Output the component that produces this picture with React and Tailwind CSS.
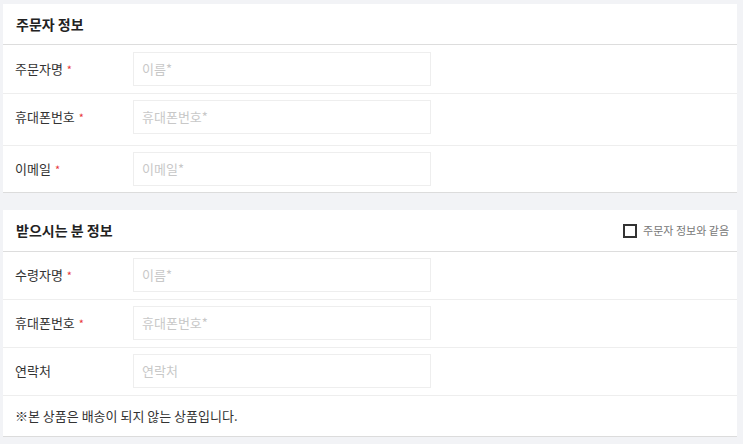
const FONT = "font-['Noto_Sans_CJK_KR','Noto_Sans',sans-serif]";

function Field({ label, required, placeholder, className }) {
  return (
    <div className={`flex items-start border-b border-[#eeeeee] pl-3 ${className}`}>
      <div className="w-[118px] h-[34px] flex items-center text-[13px] text-[#333]">
        {label}
        {required && <span className="ml-[4px] text-[#e8343b] text-[11px]">*</span>}
      </div>
      <div className="w-[298px] h-[34px] border border-[#eeeeee] px-2 flex items-center text-[13px] text-[#c8c8c8]">
        {placeholder}
      </div>
    </div>
  );
}

export default function App() {
  return (
    <div className={`min-h-[444px] bg-[#f2f3f6] pt-[4px] pl-[3px] pr-[6px] ${FONT}`}>
      {/* 주문자 정보 */}
      <div className="bg-white border-b border-[#dcdcdc]">
        <div className="h-[41px] flex items-center pl-[13px] border-b border-[#dddddd] text-[14px] font-bold text-[#222]">
          주문자 정보
        </div>
        <Field label="주문자명" required placeholder="이름*" className="pt-[7px] pb-[7px]" />
        <Field label="휴대폰번호" required placeholder="휴대폰번호*" className="pt-[6px] pb-[11px]" />
        <Field label="이메일" required placeholder="이메일*" className="pt-[6px] pb-[6px] border-b-0" />
      </div>

      {/* 받으시는 분 정보 */}
      <div className="mt-[17px] bg-white border-b border-[#dcdcdc]">
        <div className="h-[42px] flex items-center justify-between pl-[13px] pr-[8px] border-b border-[#dddddd]">
          <span className="text-[14px] font-bold text-[#222]">받으시는 분 정보</span>
          <label className="flex items-center gap-[6px] text-[11px] text-[#777]">
            <span className="w-[14px] h-[14px] border-2 border-[#333] bg-white" />
            주문자 정보와 같음
          </label>
        </div>
        <Field label="수령자명" required placeholder="이름*" className="pt-[6px] pb-[7px]" />
        <Field label="휴대폰번호" required placeholder="휴대폰번호*" className="pt-[6px] pb-[7px]" />
        <Field label="연락처" placeholder="연락처" className="pt-[6px] pb-[7px]" />
        <div className="h-[40px] flex items-center pl-3 text-[13px] text-[#333]">
          ※본 상품은 배송이 되지 않는 상품입니다.
        </div>
      </div>
    </div>
  );
}
